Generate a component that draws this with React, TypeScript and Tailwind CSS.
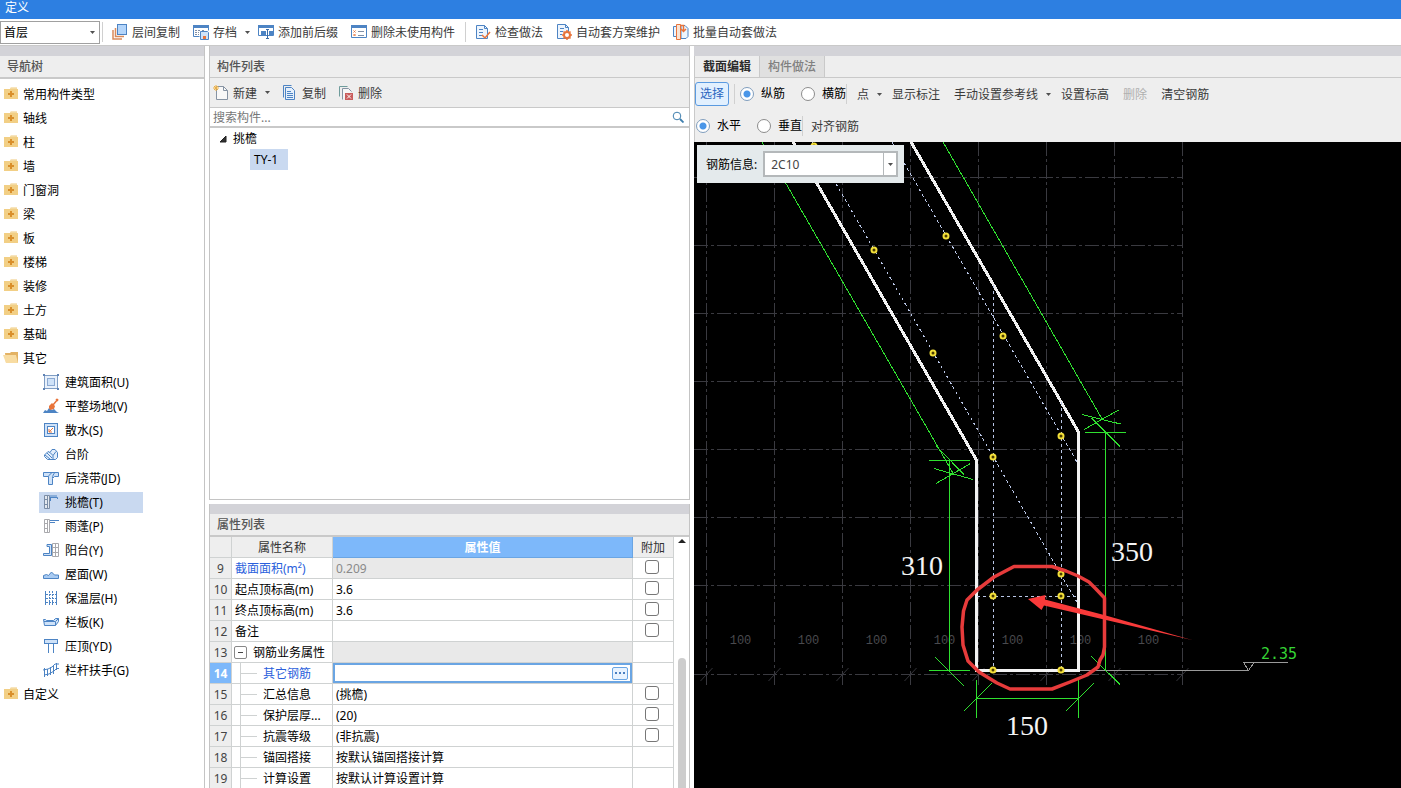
import React from 'react';
import clsx from 'clsx';

const FOLDERS = ['常用构件类型', '轴线', '柱', '墙', '门窗洞', '梁', '板', '楼梯', '装修', '土方', '基础'];

const OTHER_ITEMS = [
  { icon: 'area', label: '建筑面积(U)' },
  { icon: 'level', label: '平整场地(V)' },
  { icon: 'apron', label: '散水(S)' },
  { icon: 'steps', label: '台阶' },
  { icon: 'strip', label: '后浇带(JD)' },
  { icon: 'eave', label: '挑檐(T)' },
  { icon: 'canopy', label: '雨蓬(P)' },
  { icon: 'balcony', label: '阳台(Y)' },
  { icon: 'roof', label: '屋面(W)' },
  { icon: 'insulation', label: '保温层(H)' },
  { icon: 'board', label: '栏板(K)' },
  { icon: 'coping', label: '压顶(YD)' },
  { icon: 'rail', label: '栏杆扶手(G)' },
];

interface PropertyRow {
  no: number;
  name: string;
  value?: string;
  check?: boolean;
  blue?: boolean;
  readOnly?: boolean;
  group?: boolean;
  child?: boolean;
  active?: boolean;
}

const PROPERTIES: PropertyRow[] = [
  { no: 9, name: '截面面积(m²)', value: '0.209', check: true, blue: true, readOnly: true },
  { no: 10, name: '起点顶标高(m)', value: '3.6', check: true },
  { no: 11, name: '终点顶标高(m)', value: '3.6', check: true },
  { no: 12, name: '备注', check: true },
  { no: 13, name: '钢筋业务属性', group: true, readOnly: true },
  { no: 14, name: '其它钢筋', child: true, blue: true, active: true },
  { no: 15, name: '汇总信息', value: '(挑檐)', check: true, child: true },
  { no: 16, name: '保护层厚...', value: '(20)', check: true, child: true },
  { no: 17, name: '抗震等级', value: '(非抗震)', check: true, child: true },
  { no: 18, name: '锚固搭接', value: '按默认锚固搭接计算', child: true },
  { no: 19, name: '计算设置', value: '按默认计算设置计算', child: true },
];

const B = '#4d84c4';
const L = '#cfe2f8';
const O = '#e8743b';

const ICONS: Record<string, React.ReactNode> = {
  area: (
    <>
      <rect x="1.5" y="1.5" width="13" height="13" fill="#e9f1fb" stroke="#7f9dc4" />
      <rect x="4.5" y="4.5" width="7" height="7" fill={L} stroke="#8ba9d2" />
      <path d="M0 0h2v2H0zM14 0h2v2h-2zM0 14h2v2H0zM14 14h2v2h-2z" fill="#5f83b5" />
    </>
  ),
  level: (
    <>
      <path d="M0 15l2-3 2 1 2-3 3 2 2-1 3 3 2 1z" fill={B} />
      <path d="M15 1l-5 6M13 1l2 2" stroke={O} strokeWidth="1.5" fill="none" />
      <path d="M6 8l3-3 3 3-1 3-4 1-1-2z" fill={O} />
    </>
  ),
  apron: (
    <>
      <rect x="1.5" y="1.5" width="13" height="13" fill={L} stroke={B} />
      <rect x="4.5" y="4.5" width="7" height="7" fill="#fff" stroke={B} />
      <path d="M10 6l-4 4M6 7v3h3" stroke={O} fill="none" />
    </>
  ),
  steps: (
    <>
      <path d="M1.5 9L5 5.500l2 1 2-3h3l2.500 3v5l-2 2h-8l-3-3z" fill="#e3eefb" stroke={B} />
      <path d="M2 9l5 4M4 7l5 5M7 6.500l3 3 3-4M10 9.500v4" stroke={B} fill="none" />
    </>
  ),
  strip: (
    <>
      <path d="M.5 2.500h15v4h-4l-2 2v6h-4v-8h-5z" fill={L} stroke={B} />
      <path d="M5.500 6.500c1-2 2-3 4-4M9.500 8c0-2 1-4 2-5" stroke={B} fill="none" />
    </>
  ),
  eave: (
    <>
      <path d="M1.500 1.500h5v13h-5zM1.500 5.500h3M1.500 10.500h3M4.500 2v12" fill="#e3e8ef" stroke="#7b8da6" />
      <path d="M7 2h7M7 3.500h7.500v1.500M7.500 4v3" stroke={B} fill="none" />
    </>
  ),
  canopy: (
    <>
      <path d="M1.500 1.500h5v13h-5zM1.500 5.500h3M1.500 10.500h3M4.500 2v12" fill="#fff" stroke="#a9a9ad" />
      <path d="M7 2.500h9M7 4.500h5" stroke={B} fill="none" />
    </>
  ),
  balcony: (
    <>
      <path d="M9.500 1.500h6v13h-6zM12.500 1.500v13M9.500 5.500h6M9.500 10.500h6" fill="#fff" stroke="#a9a9ad" />
      <path d="M4 2.500h4.500v11H.5v-2h6v-7H4z" fill={L} stroke={B} />
    </>
  ),
  roof: <path d="M.5 12.500v-3l3-1 2 1 3-3.500 3 3h4v3.500z" fill="#a9cbf2" stroke={B} />,
  insulation: (
    <>
      <path d="M2.500 1v14M13.500 1v14" stroke={B} />
      <path d="M6.500 1v14M9.500 1v14M3 4.500h10M3 8.500h10M3 12.500h10" stroke={B} strokeDasharray="2 1" />
    </>
  ),
  board: (
    <>
      <path d="M.5 5.500h2l1 1h7l2-2h3v3l-3 4h-11z" fill={L} stroke={B} />
      <path d="M12.500 11.500v-4l3-3M1 7.500h11" stroke={B} fill="none" />
    </>
  ),
  coping: (
    <>
      <rect x="1.500" y="1.500" width="13" height="4" fill={L} stroke={B} />
      <path d="M5.500 6v9M10.500 6v9" stroke={B} />
    </>
  ),
  rail: (
    <path d="M1.500 6v9M4.500 7v7M7.500 5v8M10.500 3v9M13.500 1v7M0 8l5-1 4-2 3-3h4M1 13l5-1 5-3 2-2M13 6.500h3" stroke={B} fill="none" />
  ),
  folder: (
    <>
      <path d="M1 3h6l1-2h6v2h1v10H1z" fill="#f2cf85" />
      <path d="M8 1h6v1.500H8z" fill="#f7e4bd" />
      <path d="M7 5h2v2h2v2H9v2H7V9H5V7h2z" fill="#d98f2b" />
    </>
  ),
  folderOpen: (
    <>
      <path d="M2 3h5l1-1h7v11H3z" fill="#e3b264" />
      <path d="M0 5h13l2 8H3z" fill="#f8dca2" />
    </>
  ),
  layerCopy: (
    <>
      <path d="M1 6v9h9M3.500 4v8.500H12" stroke="#d98a5c" strokeWidth="1.500" fill="none" />
      <rect x="5.500" y=".5" width="9" height="10" fill="#b4d5fa" stroke={B} />
    </>
  ),
  archive: (
    <>
      <path d="M.5 1.500h15v5M.5 1.500v11h6" fill="none" stroke={B} />
      <path d="M0 1h16v3H0z" fill={B} />
      <path d="M2 6.500h5M2 8.500h4M2 10.500h4M9 6.500h3" stroke="#7f8fa6" strokeDasharray="2 1" />
      <path d="M7.500 7.500h7l1 1v7h-8z" fill={L} stroke={B} />
      <path d="M10 12h3v3h-3z" fill={O} />
    </>
  ),
  affix: (
    <>
      <path d="M.5 1.500h15v10H.5z" fill="#fff" stroke={B} />
      <path d="M0 1h16v3H0z" fill={B} />
      <path d="M3 7h5v5H3zM11 7h4v5h-4z" fill={B} />
      <path d="M9.500 5v10M8 5.500h3M8 14.500h3" stroke="#3c6da8" />
    </>
  ),
  unused: (
    <>
      <path d="M.5 1.500h15v12H.5z" fill="#fff" stroke={B} />
      <path d="M0 1h16v3H0z" fill={B} />
      <path d="M2.500 6.500l2 2M4.500 6.500l-2 2M2.500 10l2 2M4.500 10l-2 2" stroke={O} />
      <path d="M7 7.500h6M7 11.500h6" stroke="#7f8fa6" />
    </>
  ),
  check: (
    <>
      <path d="M1.500 1.500h8l3 3v10h-11z" fill="#eef5fd" stroke={B} />
      <path d="M9.500 1.500v3h3M4 5.500h4M4 8.500h4M4 11.500h3" stroke={B} fill="none" />
      <path d="M7 11l3 3 5-6" stroke={O} strokeWidth="1.500" fill="none" />
    </>
  ),
  scheme: (
    <>
      <path d="M1.500.5h8l3 3v11h-11z" fill="#eef5fd" stroke={B} />
      <path d="M9.500.5v3h3M4 4.500h4M4 7.500h3M4 10.500h2" stroke={B} fill="none" />
      <circle cx="11" cy="11" r="3" fill="#fff" stroke={O} strokeWidth="2" />
      <path d="M11 6v2M11 14v2M6 11h2M14 11h2M7.500 7.500l1 1M14.500 14.500l-1-1M14.500 7.500l-1 1M7.500 14.500l1-1" stroke={O} strokeWidth="1.500" />
    </>
  ),
  batch: (
    <>
      <path d="M3 2.500H.5v10H3M8 1.500h4l3 3v8l-2 2H8z" fill="#eef5fd" stroke={B} />
      <path d="M3.500.5h4v15h-4z" fill="#f8e3d4" stroke={O} />
      <path d="M7.500 1.500h3v5M8 5l2.500 2.500L13 5" stroke={O} strokeWidth="1.500" fill="none" />
    </>
  ),
  create: (
    <>
      <path d="M3.500 1.500h7l4 4v9h-11z" fill="#f8f8f8" stroke="#8693a3" />
      <path d="M10.500 1.500v4h4" fill="none" stroke="#8693a3" />
      <path d="M3 0v6M0 3h6M1 1l4 4M5 1L1 5" stroke="#eeb042" />
    </>
  ),
  copy: (
    <>
      <path d="M1.500 12.500v-12h8" fill="none" stroke={B} />
      <path d="M3.500 2.500h6l3 3v9h-9z" fill="#e5f0fc" stroke={B} />
      <path d="M5 6.500h4M5 8.500h6M5 10.500h6M5 12.500h6" stroke={B} />
    </>
  ),
  remove: (
    <>
      <path d="M1.500 11.500v-10h8" fill="none" stroke="#6f9c9c" />
      <path d="M4.500 14.500v-11h6l3 3" fill="#f6f6f6" stroke="#8693a3" />
      <path d="M7 8h8v7H7z" fill="#c95c5c" />
      <path d="M9 9.500l4 4M13 9.500l-4 4" stroke="#fff" />
    </>
  ),
};

function Icon({ name }: { name: string }) {
  return (
    <svg className="size-4 shrink-0" viewBox="0 0 16 16" fill="none" aria-hidden="true">
      {ICONS[name]}
    </svg>
  );
}

function Caret({ className }: { className?: string }) {
  return (
    <svg className={clsx('h-[3px] w-[5px] shrink-0', className)} viewBox="0 0 5 3" aria-hidden="true">
      <path d="M0 0h5L2.500 3z" fill="#505050" />
    </svg>
  );
}

function ToolButton({ icon, label, menu }: { icon?: string; label: string; menu?: boolean }) {
  return (
    <button className="flex items-center gap-1 whitespace-nowrap text-[#3a3a3a]">
      {icon && <Icon name={icon} />}
      <span className="pt-[2px]">{label}</span>
      {menu && <Caret className="ml-1" />}
    </button>
  );
}

function Divider() {
  return <div className="h-5 w-px shrink-0 bg-[#d0d0d0]" />;
}

function Radio({ name, label, checked }: { name: string; label: string; checked?: boolean }) {
  return (
    <label className="flex items-center gap-[7px] whitespace-nowrap text-black">
      <input
        type="radio"
        name={name}
        defaultChecked={checked}
        className="size-[14px] appearance-none rounded-full border border-[#8c8c8c] bg-white checked:border-[#7f9dbd] checked:bg-[radial-gradient(circle,#4a96e8_0_3px,#fff_4px)]"
      />
      <span>{label}</span>
    </label>
  );
}

function PanelTitle({ children }: { children: React.ReactNode }) {
  return <h2 className="h-[21px] shrink-0 bg-[#eeeeee] px-[7px] font-medium leading-[22px] text-[#555]">{children}</h2>;
}

function NavTree() {
  return (
    <nav className="flex w-[205px] shrink-0 flex-col border-r border-[#c4c4c4]">
      <div className="h-[10px] shrink-0 bg-[#d3d3d8]" />
      <PanelTitle>导航树</PanelTitle>
      <ul className="border-t-2 border-[#c9c9c9] pt-[3px]">
        {FOLDERS.map(f => (
          <li key={f} className="flex h-6 items-center gap-1 pl-[3px]">
            <Icon name="folder" />
            <span className="pt-[2px]">{f}</span>
          </li>
        ))}
        <li>
          <div className="flex h-6 items-center gap-1 pl-[3px]">
            <Icon name="folderOpen" />
            <span className="pt-[2px]">其它</span>
          </div>
          <ul className="pl-[39px]">
            {OTHER_ITEMS.map(item => (
              <li key={item.icon} className="flex h-6 items-center">
                <a
                  href="#"
                  className={clsx('flex h-[21px] w-[104px] items-center gap-[6px] whitespace-nowrap pl-1', item.icon === 'eave' && 'bg-[#c9d9f0]')}
                >
                  <Icon name={item.icon} />
                  <span className="pt-[2px]">{item.label}</span>
                </a>
              </li>
            ))}
          </ul>
        </li>
        <li className="flex h-6 items-center gap-1 pl-[3px]">
          <Icon name="folder" />
          <span className="pt-[2px]">自定义</span>
        </li>
      </ul>
    </nav>
  );
}

function ComponentList() {
  return (
    <section className="flex min-h-0 flex-1 flex-col border-x border-b border-[#c4c4c4]">
      <div className="h-[10px] shrink-0 bg-[#d3d3d8]" />
      <PanelTitle>构件列表</PanelTitle>
      <div className="flex h-[31px] shrink-0 items-center gap-3 border-y border-[#c9c9c9] bg-[#eeeeee] px-[3px]">
        <ToolButton icon="create" label="新建" menu />
        <ToolButton icon="copy" label="复制" />
        <ToolButton icon="remove" label="删除" />
      </div>
      <div className="flex h-5 shrink-0 items-center border-b-2 border-[#c9c9c9] pr-[5px]">
        <input
          aria-label="搜索构件"
          placeholder="搜索构件..."
          className="min-w-0 flex-1 px-[3px] pt-px outline-none placeholder:text-[#777]"
        />
        <svg className="size-3" viewBox="0 0 12 12" fill="none" stroke="#3f7fae" aria-hidden="true">
          <circle cx="5" cy="5" r="3.800" />
          <path d="M8 8l3.500 3.500" strokeWidth="1.800" />
        </svg>
      </div>
      <ul>
        <li>
          <div className="flex h-[21px] items-center gap-[6px] pl-[9px]">
            <svg className="h-2 w-2" viewBox="0 0 8 8" aria-hidden="true">
              <path d="M7 1v6H1z" fill="#333" stroke="#222" />
            </svg>
            <span className="pt-px">挑檐</span>
          </div>
          <a href="#" className="ml-10 inline-flex h-[21px] items-center bg-[#c9d9f0] pl-1 pr-[10px]">
            TY-1
          </a>
        </li>
      </ul>
    </section>
  );
}

function PropertyTableRow({ row }: { row: PropertyRow }) {
  return (
    <tr className="h-[21px]">
      <th
        scope="row"
        className={clsx(
          'border-b border-r border-[#cfd2d2] p-0 pt-[2px] text-center',
          row.active ? 'bg-[#7db8fa] font-bold text-white' : 'bg-[#eeeeee] font-normal text-[#444]'
        )}
      >
        {row.no}
      </th>
      <td className="border-b border-r border-[#cfd2d2] p-0">
        <div className={clsx('flex h-5 items-center overflow-hidden whitespace-nowrap', row.blue ? 'text-[#2b5fdc]' : 'text-black')}>
          {row.group && (
            <button
              aria-label="收起"
              className="ml-[2px] mr-[6px] flex size-[13px] items-center justify-center rounded-[2px] border border-[#888] bg-white"
            >
              <span className="h-px w-[5px] bg-[#444]" />
            </button>
          )}
          {row.child && (
            <span className="ml-2 mr-[6px] flex h-full w-[17px] items-center border-l border-[#cfd2d2]">
              <span className="h-px w-full bg-[#cfd2d2]" />
            </span>
          )}
          <span className={clsx('pt-[2px]', !row.group && !row.child && 'pl-[3px]')}>{row.name}</span>
        </div>
      </td>
      <td className={clsx('border-b border-r border-[#cfd2d2] p-0', row.readOnly && 'bg-[#e9e9e9]')}>
        {row.active ? (
          <div className="flex h-5 items-center border-2 border-[#6aa5e3] bg-white pr-[2px]">
            <input aria-label={row.name} className="h-4 min-w-0 flex-1 px-1 outline-none" />
            <button
              aria-label="更多"
              className="flex h-[13px] w-4 items-center justify-center gap-[2px] rounded-[2px] border border-[#6aa5e3] bg-[#e8f3ff]"
            >
              <span className="size-[2px] bg-[#4a7fc0]" />
              <span className="size-[2px] bg-[#4a7fc0]" />
              <span className="size-[2px] bg-[#4a7fc0]" />
            </button>
          </div>
        ) : (
          <div className={clsx('flex h-5 items-center px-[3px]', row.readOnly ? 'text-[#8a8a8a]' : 'text-black')}>
            <span className="pt-[2px]">{row.value}</span>
          </div>
        )}
      </td>
      <td className="border-b border-r border-[#cfd2d2] p-0">
        {row.check && (
          <input
            type="checkbox"
            aria-label={`${row.name} 附加`}
            className="mb-[2px] ml-3 block size-[14px] appearance-none rounded-[3px] border border-[#777] bg-white"
          />
        )}
      </td>
    </tr>
  );
}

function PropertyPanel() {
  return (
    <section className="flex h-[284px] shrink-0 flex-col overflow-hidden border-x border-[#c4c4c4]">
      <div className="h-[10px] shrink-0 bg-[#d3d3d8]" />
      <PanelTitle>属性列表</PanelTitle>
      <div className="flex min-h-0 flex-1 items-stretch border-t-2 border-[#c9c9c9]">
        <div className="min-w-0 flex-1 overflow-hidden">
          <table className="w-full table-fixed border-separate border-spacing-0 leading-[18px]">
            <colgroup>
              <col className="w-[22px]" />
              <col className="w-[101px]" />
              <col />
              <col className="w-[41px]" />
            </colgroup>
            <thead>
              <tr className="h-[21px] bg-[#eeeeee]">
                <th aria-label="序号" className="border-b border-r border-[#cfd2d2] p-0" />
                <th className="border-b border-r border-[#cfd2d2] p-0 pt-[2px] font-normal text-[#333]">属性名称</th>
                <th className="border-b border-r border-[#6aa5e3] bg-[#7db8fa] p-0 pt-[2px] font-bold text-white">属性值</th>
                <th className="border-b border-r border-[#cfd2d2] p-0 pt-[2px] font-normal text-[#333]">附加</th>
              </tr>
            </thead>
            <tbody>
              {PROPERTIES.map(row => (
                <PropertyTableRow key={row.no} row={row} />
              ))}
            </tbody>
          </table>
        </div>
        <div className="flex w-[15px] shrink-0 flex-col items-center justify-between pt-[2px]">
          <svg className="h-1 w-2" viewBox="0 0 8 4" aria-hidden="true">
            <path d="M4 0l4 4H0z" fill="#222" />
          </svg>
          <div className="h-[130px] w-2 rounded-t bg-[#cdcdcd]" />
        </div>
      </div>
    </section>
  );
}

const GRID_X = [706.5, 774.5, 842.5, 910.5, 978.5, 1046.5, 1114.5, 1182.5];
const GRID_Y = [177.5, 245.5, 313.5, 381.5, 449.5, 517.5, 585.5, 674.5];
const REBARS = [
  [814, 146], [874, 250], [933, 353], [993, 457], [1061, 574],
  [946, 236], [1003, 336], [1061, 436],
  [993, 596], [1061, 596], [993, 670], [1061, 670],
];

function SectionDrawing() {
  return (
    <svg className="block h-full w-full" viewBox="694 142 707 646" preserveAspectRatio="xMinYMin meet" fill="none">
      {/* Grid */}
      <g stroke="#3a3a40" strokeDasharray="14 3 3 3" shapeRendering="crispEdges">
        {GRID_X.map(x => <path key={x} d={`M${x} 142V687`} />)}
        {GRID_Y.map(y => <path key={y} d={`M694 ${y}H1183`} />)}
      </g>
      <g stroke="#34343a">
        {GRID_X.map(x => <path key={x} d={`M${x - 6} 681l12 -13`} />)}
      </g>
      <g fill="#4a4a4e" fontSize="12" textAnchor="middle" className="font-['Liberation_Mono',monospace]">
        {GRID_X.slice(0, 7).map(x => <text key={x} x={x + 34} y="644">100</text>)}
      </g>

      {/* Elevation mark */}
      <path
        d="M1080 670.5H1248.500M1243 662.500H1288M1243.500 662.500L1248.500 670.500L1254 662.500"
        stroke="#9a9a9a"
        shapeRendering="crispEdges"
      />
      <text x="1261" y="659" fontSize="15" fill="#35d435" className="font-['DejaVu_Sans_Mono',monospace]">2.35</text>

      {/* Dimension lines */}
      <g stroke="#2fe02f" shapeRendering="crispEdges">
        <path d="M762 142L953.500 474M929 460.500H970M949.500 460V671M936 446l28 28.500M934 468.500l39 11M936 483.500l34.500 -20" />
        <path d="M929 670.500H970M935 657l29 29" />
        <path d="M943 142L1102 419M1085 432.500H1126M1105.500 432V671M1091.500 418l28.500 28.500M1082 414.500l38.500 9.500M1084 429.500l34.500 -19.500M1091 656l29 28.500" />
        <path d="M976.500 698.500H1078.500M976.500 680V717.500M1078.500 680V717.500M963.500 711.500l28 -28M1065.500 711.500l28 -28" />
      </g>
      <g fill="#f4f4f4" fontSize="28" className="font-['Liberation_Serif',serif]">
        <text x="901" y="575">310</text>
        <text x="1111" y="561">350</text>
        <text x="1006" y="735">150</text>
      </g>

      {/* Section outline */}
      <path d="M793 142L976.500 460V670.500H1078.500V432L911 142" stroke="#f2f2f2" strokeWidth="3" shapeRendering="crispEdges" />

      {/* Rebar lines */}
      <g stroke="#b9c6e6" strokeDasharray="3 3" shapeRendering="crispEdges">
        <path d="M812 142L1078 604M892 142L1078 464M993.500 285V670M1061.500 402V670M977 596.500H1078" />
      </g>
      <g stroke="#f3e03a" strokeWidth="2" fill="#4a3c00">
        {REBARS.map(([x, y]) => <circle key={`${x}-${y}`} cx={x} cy={y} r="2.500" />)}
      </g>

      {/* Markup */}
      <path
        d="M1014 566.500L1052 566.500L1066 571L1078 576L1089 582L1096 589L1104.500 598V647L1103 655L1100 660L1098 667L1087 675L1070 682L1052 689H1010L997 683L979 672L968 661L963 645L962 627L963.500 611L967 600L977 590L994 577Z"
        stroke="#e63b3b"
        strokeWidth="3.500"
        strokeLinejoin="round"
      />
      <path d="M1028 599L1045.500 595L1045 599.500L1104 615L1192 640L1104 619.500L1044 605.500L1041.500 610Z" fill="#f93a3a" />
    </svg>
  );
}

function SectionEditor() {
  return (
    <main className="flex min-w-0 flex-1 flex-col">
      <div className="h-[10px] shrink-0 bg-[#d3d3d8]" />
      <div role="tablist" className="flex h-[22px] shrink-0 border-b border-l border-[#c9c9c9] bg-[#eeeeee]">
        <button role="tab" aria-selected="true" className="px-2 font-bold text-[#2b2b2b]">截面编辑</button>
        <button role="tab" aria-selected="false" className="border-x border-[#c9c9c9] bg-[#e0e0e0] px-2 font-medium text-[#808080]">
          构件做法
        </button>
      </div>
      <div className="flex h-8 shrink-0 items-center gap-[14px] overflow-hidden border-l border-[#c9c9c9] bg-[#eeeeee]">
        <div className="flex items-center gap-[5px]">
          <button className="h-6 rounded-[3px] border border-[#5a9ae0] bg-[#e2f0fe] px-1 text-[#2b66c0]">选择</button>
          <Divider />
          <Radio name="bar" label="纵筋" checked />
        </div>
        <div className="flex items-center pl-[2px]">
          <Radio name="bar" label="横筋" />
          <Divider />
        </div>
        <div className="-ml-1 flex items-center gap-[10px]">
          <ToolButton label="点" menu />
          <ToolButton label="显示标注" />
        </div>
        <div className="flex items-center gap-[10px]">
          <ToolButton label="手动设置参考线" menu />
          <ToolButton label="设置标高" />
        </div>
        <button disabled className="whitespace-nowrap pt-[2px] text-[#b0b0b0]">删除</button>
        <ToolButton label="清空钢筋" />
      </div>
      <div className="flex h-8 shrink-0 items-center gap-4 border-l border-[#c9c9c9] bg-[#eeeeee] pl-px">
        <Radio name="dir" label="水平" checked />
        <div className="flex items-center">
          <Radio name="dir" label="垂直" />
          <Divider />
        </div>
        <div className="-ml-2">
          <ToolButton label="对齐钢筋" />
        </div>
      </div>
      <div className="relative min-h-0 flex-1 bg-black">
        <SectionDrawing />
        <div className="absolute left-[3px] top-[3px] flex h-[38px] items-center gap-[6px] bg-[#e4eaec] pl-[9px] pr-[6px]">
          <label htmlFor="rebar-info" className="pt-[2px]">钢筋信息:</label>
          <div className="relative">
            <select
              id="rebar-info"
              className="h-[26px] w-[135px] appearance-none border-2 border-[#b4b8ba] bg-white pl-[6px] pt-[2px] text-[#444]"
            >
              <option>2C10</option>
            </select>
            <div className="pointer-events-none absolute inset-y-[2px] right-[2px] flex w-[13px] items-center justify-center border-l border-[#b4b8ba]">
              <Caret />
            </div>
          </div>
        </div>
      </div>
    </main>
  );
}

export default function App() {
  return (
    <div className="flex h-screen flex-col overflow-hidden bg-white font-['Noto_Sans','Noto_Sans_CJK_SC',sans-serif] text-xs text-black">
      <header className="h-[19px] shrink-0 bg-[#2d7fe1] pl-[5px] leading-4 text-white">定义</header>
      <div className="flex h-[27px] shrink-0 items-center gap-[13px] border-b border-[#c9c9c9]">
        <div className="flex items-center gap-[2px]">
          <div className="relative">
            <select
              aria-label="楼层"
              className="block h-[23px] w-[100px] appearance-none border border-[#a0a0a0] bg-white pl-[3px] pt-px"
            >
              <option>首层</option>
            </select>
            <Caret className="pointer-events-none absolute right-[5px] top-[10px]" />
          </div>
          <Divider />
        </div>
        <div className="-ml-1 flex items-center gap-[13px]">
          <ToolButton icon="layerCopy" label="层间复制" />
          <div className="flex items-center gap-2">
            <ToolButton icon="archive" label="存档" menu />
            <ToolButton icon="affix" label="添加前后缀" />
          </div>
          <ToolButton icon="unused" label="删除未使用构件" />
        </div>
        <div className="-ml-[3px] flex items-center gap-[9px]">
          <Divider />
          <ToolButton icon="check" label="检查做法" />
        </div>
        <ToolButton icon="scheme" label="自动套方案维护" />
        <ToolButton icon="batch" label="批量自动套做法" />
      </div>
      <div className="flex min-h-0 flex-1 gap-1">
        <NavTree />
        <div className="flex w-[481px] shrink-0 flex-col gap-1">
          <ComponentList />
          <PropertyPanel />
        </div>
        <SectionEditor />
      </div>
    </div>
  );
}
